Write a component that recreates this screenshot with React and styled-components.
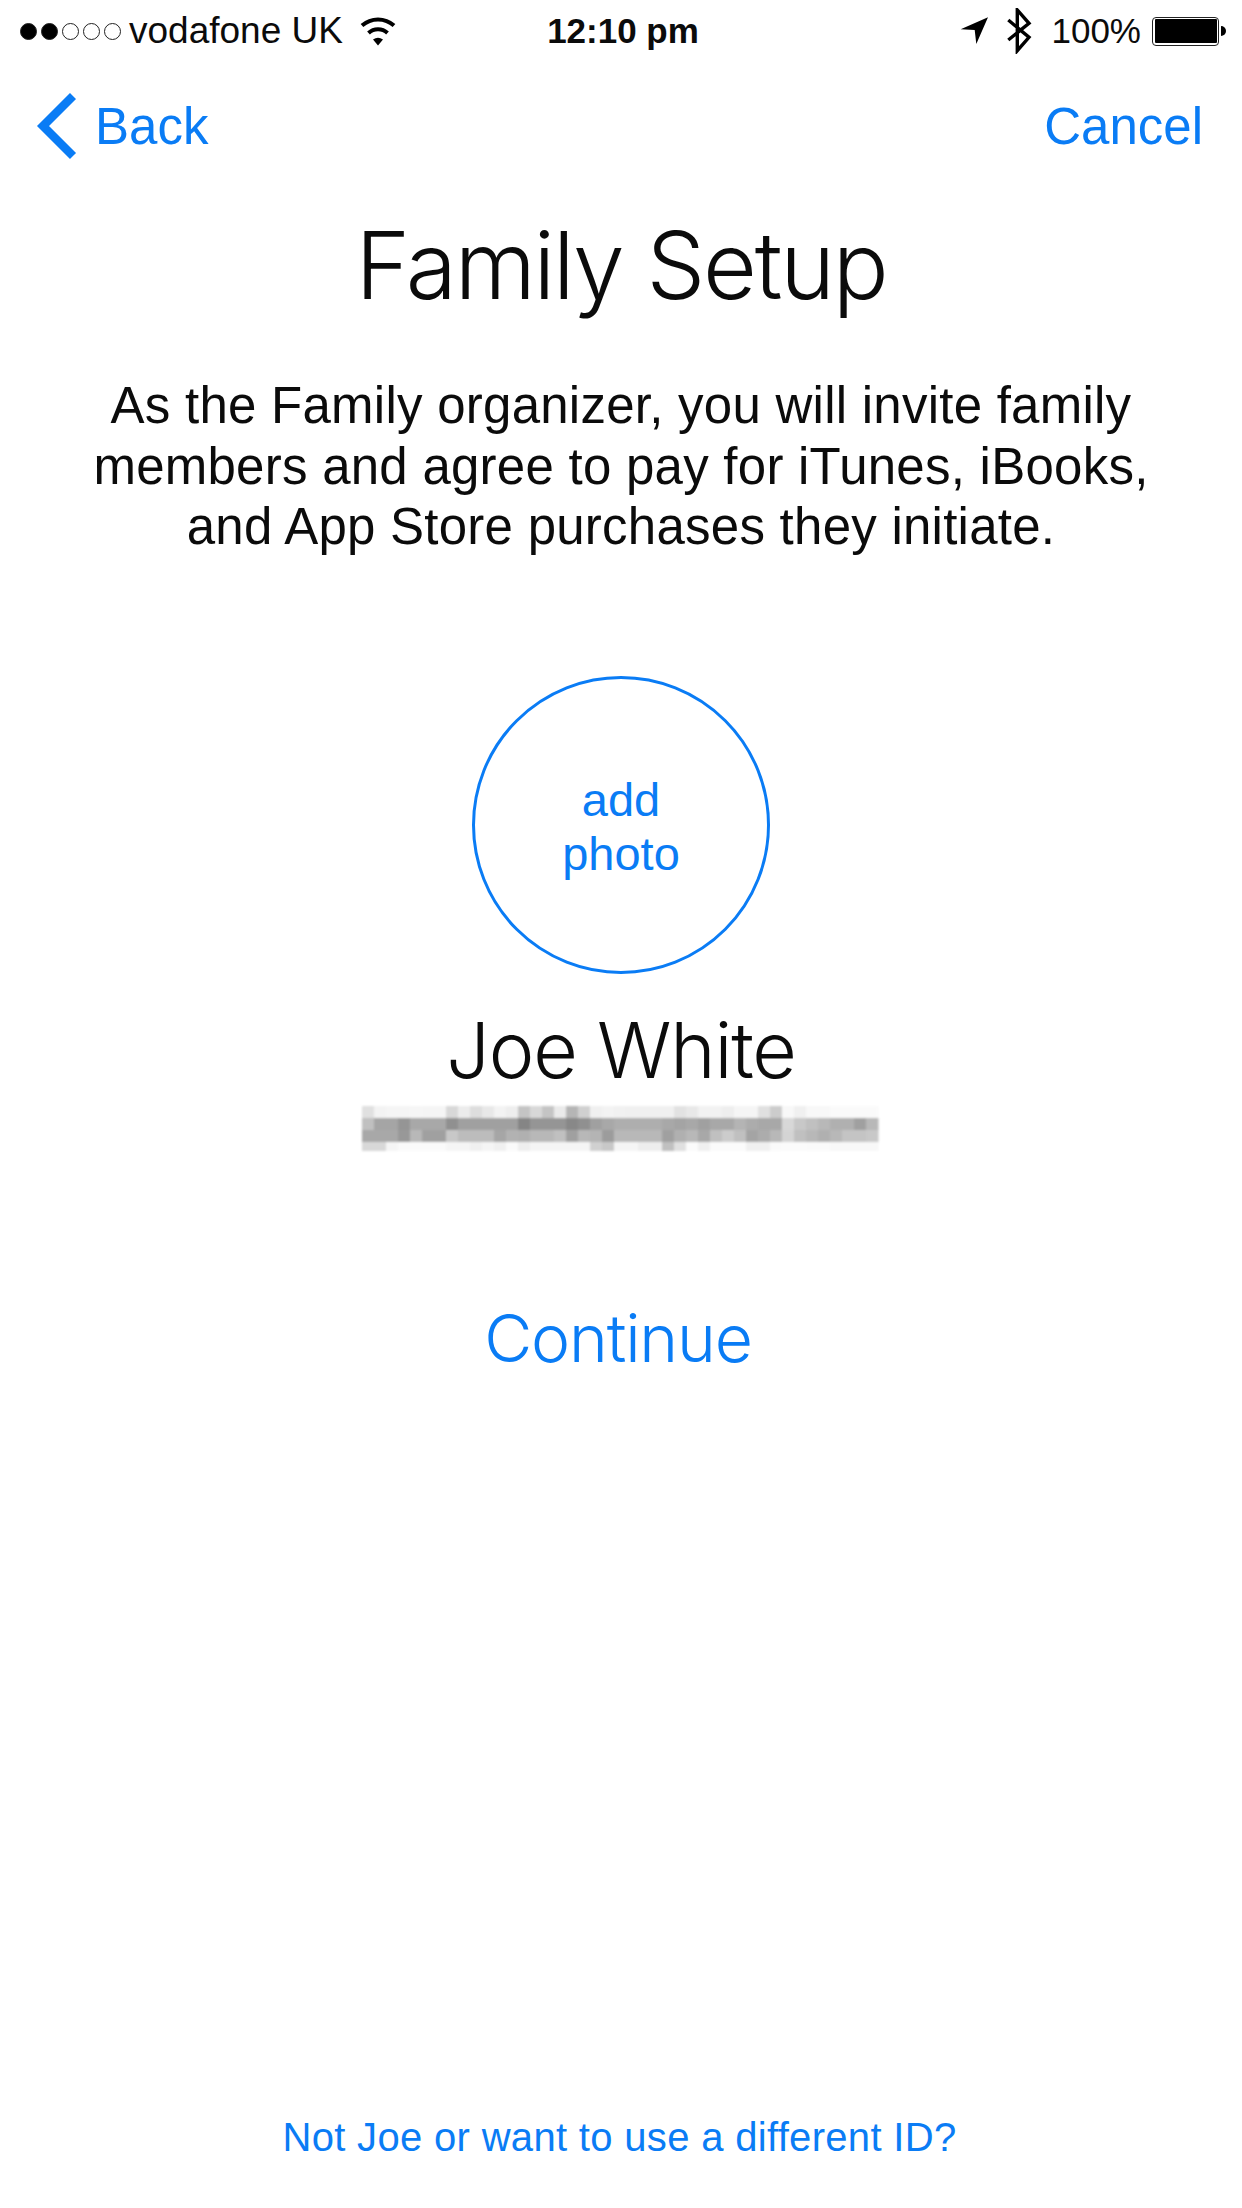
import React from 'react';
import styled, { createGlobalStyle } from 'styled-components';

const BLUE = '#0a7cf5';

const GlobalStyle = createGlobalStyle`
  html, body {
    margin: 0;
    padding: 0;
    background: #fff;
  }
`;

const Screen = styled.div`
  width: 1242px;
  height: 2208px;
  display: flex;
  flex-direction: column;
  align-items: center;
  overflow: hidden;
  background: #fff;
  color: #0b0b0b;
  font-family: "Liberation Sans", Arial, sans-serif;
`;

const StatusBar = styled.div`
  width: 100%;
  height: 62px;
  box-sizing: border-box;
  padding: 0 16px 0 20px;
  display: grid;
  grid-template-columns: 1fr auto 1fr;
  align-items: center;
  font-size: 37px;
`;

const StatusLeft = styled.div`
  display: flex;
  align-items: center;
`;

const StatusRight = styled.div`
  display: flex;
  align-items: center;
  justify-content: flex-end;
`;

const Signal = styled.div`
  display: flex;
  gap: 4px;
  margin-right: 8px;
`;

const Dot = styled.span`
  width: 17px;
  height: 17px;
  box-sizing: border-box;
  border-radius: 50%;
  border: 1.5px solid #222;
  background: ${({ $on }) => ($on ? '#000' : '#fff')};
`;

const Carrier = styled.span`
  margin-right: 16px;
`;

const Time = styled.span`
  font-weight: 700;
  font-size: 35px;
`;

const Percent = styled.span`
  margin: 0 11px 0 18px;
  font-size: 35px;
`;

const LocationSlot = styled.span`
  display: flex;
  margin: 0 15px 0 1px;
`;

const Battery = styled.div`
  width: 67px;
  height: 29px;
  box-sizing: border-box;
  border: 1.5px solid #222;
  border-radius: 4px;
  padding: 1.5px;
  background: #fff;
  display: flex;
`;

const BatteryFill = styled.div`
  flex: 1;
  background: #000;
  border-radius: 1px;
`;

const BatteryNub = styled.div`
  width: 5px;
  height: 10px;
  margin-left: 2px;
  background: #000;
  border-radius: 0 5px 5px 0;
`;

const NavBar = styled.nav`
  width: 100%;
  height: 78px;
  margin-top: 25px;
  box-sizing: border-box;
  padding: 0 39px 0 36px;
  display: flex;
  align-items: center;
  justify-content: space-between;
  font-size: 51px;
  color: ${BLUE};
`;

const BackLink = styled.div`
  display: flex;
  align-items: center;
  gap: 17px;
`;

const Title = styled.h1`
  margin: 45px 0 0;
  font-family: Inter, "Liberation Sans", sans-serif;
  font-weight: 300;
  font-size: 93px;
  line-height: 110px;
  letter-spacing: -2.2px;
`;

const Intro = styled.p`
  margin: 56px 0 0;
  font-size: 51px;
  line-height: 60.5px;
  text-align: center;
  letter-spacing: 0.25px;
  white-space: nowrap;
`;

const PhotoCircle = styled.div`
  width: 298px;
  height: 298px;
  margin-top: 118px;
  padding-top: 4px;
  box-sizing: border-box;
  border: 3px solid ${BLUE};
  border-radius: 50%;
  display: flex;
  align-items: center;
  justify-content: center;
  text-align: center;
  color: ${BLUE};
  font-size: 47px;
  line-height: 54px;
`;

const Name = styled.div`
  margin-top: 26px;
  font-family: Inter, "Liberation Sans", sans-serif;
  font-weight: 300;
  font-size: 77px;
  line-height: 100px;
  letter-spacing: -1.2px;
`;

const Redacted = styled.svg`
  display: block;
`;

const ContinueLink = styled.div`
  margin: 133px 6px 0 0;
  font-family: Inter, "Liberation Sans", sans-serif;
  font-weight: 300;
  font-size: 66px;
  line-height: 90px;
  color: ${BLUE};
  letter-spacing: -1.2px;
`;

const Spacer = styled.div`
  flex: 1;
`;

const FooterLink = styled.div`
  margin: 0 3px 48px 0;
  font-size: 40px;
  line-height: 46px;
  color: ${BLUE};
  letter-spacing: 0.32px;
`;

// pixelated e-mail, one row per mosaic line, 12px cells
const MOSAIC = [
  'e0 f3 f5 f5 f6 f5 f5 d8 ec dd e8 f3 ee c4 d8 c4 ea b5 d0 f0 f3 f1 f0 f0 f0 f0 e2 e8 f2 f2 ee f5 f5 e0 cc f8 f0 f8 f8 fa fa fa fa',
  'c0 a5 a5 95 a8 a8 a8 90 a0 a0 a0 a0 a0 85 95 95 95 88 90 a0 a8 ae ae ae ae a8 a4 a8 a0 a8 a8 b4 ac a8 a8 d8 c8 c0 b8 b0 b0 a0 b8',
  'a8 a8 a8 98 b8 a0 a0 c8 bc bc bc a6 b2 b0 b8 b8 c0 a0 b8 b4 9c b8 b8 b8 b8 a0 b0 b8 a8 c0 cc c0 a4 ac b8 d4 c0 b8 b0 b8 c4 c4 c8',
  'd8 d8 f5 fa fa fa fa f5 f5 f0 f5 f0 fa ee f5 f5 f5 f5 f5 d0 c8 f5 f5 ee ee c0 e0 fb f0 fb fb fb f0 f0 fa fb fb fa fa f8 f8 f8 f8',
].map((row) => row.split(' '));

const WifiIcon = () => (
  <svg width="38" height="30" viewBox="0 0 38 30" fill="none" stroke="#000">
    <path d="M3 9.5 A24 24 0 0 1 35 9.5" strokeWidth="4" />
    <path d="M9.5 17 A14 14 0 0 1 28.5 17" strokeWidth="4" />
    <path d="M14 23.5 Q19 20 24 23.5 L19 29.5 Z" fill="#000" stroke="none" />
  </svg>
);

const LocationIcon = () => (
  <svg width="32" height="32" viewBox="0 0 32 32">
    <path d="M2.7 14.3 L30 2.3 L18.3 29 L16.7 15 Z" fill="#000" />
  </svg>
);

const BluetoothIcon = () => (
  <svg width="28" height="46" viewBox="0 0 28 46" fill="none" stroke="#000" strokeWidth="3.4">
    <path d="M3.3 12 L24 29.3 L12.3 42.7 L12.3 2 L24 15.3 L3.3 32" />
  </svg>
);

const ChevronIcon = () => (
  <svg width="42" height="66" viewBox="0 0 42 66" fill="none" stroke={BLUE} strokeWidth="8.5">
    <path d="M37 3 L7 33 L37 63" />
  </svg>
);

export default function App() {
  return (
    <Screen>
      <GlobalStyle />
      <StatusBar>
        <StatusLeft>
          <Signal>
            {[true, true, false, false, false].map((on, i) => (
              <Dot key={i} $on={on} />
            ))}
          </Signal>
          <Carrier>vodafone UK</Carrier>
          <WifiIcon />
        </StatusLeft>
        <Time>12:10 pm</Time>
        <StatusRight>
          <LocationSlot>
            <LocationIcon />
          </LocationSlot>
          <BluetoothIcon />
          <Percent>100%</Percent>
          <Battery>
            <BatteryFill />
          </Battery>
          <BatteryNub />
        </StatusRight>
      </StatusBar>

      <NavBar>
        <BackLink>
          <ChevronIcon />
          Back
        </BackLink>
        <span>Cancel</span>
      </NavBar>

      <Title>Family Setup</Title>
      <Intro>
        As the Family organizer, you will invite family
        <br />
        members and agree to pay for iTunes, iBooks,
        <br />
        and App Store purchases they initiate.
      </Intro>

      <PhotoCircle>
        <div>
          add
          <br />
          photo
        </div>
      </PhotoCircle>
      <Name>Joe White</Name>
      <Redacted width="540" height="60" viewBox="0 0 540 60">
        <filter id="soft">
          <feGaussianBlur stdDeviation="1" />
        </filter>
        <g filter="url(#soft)">
          {MOSAIC.map((row, y) =>
            row.map((c, x) => (
              <rect
                key={`${x}-${y}`}
                x={11 + x * 12}
                y={6 + y * 12}
                width="12.5"
                height={y === 3 ? 9 : 12.5}
                fill={`#${c}${c}${c}`}
              />
            ))
          )}
        </g>
      </Redacted>

      <ContinueLink>Continue</ContinueLink>
      <Spacer />
      <FooterLink>Not Joe or want to use a different ID?</FooterLink>
    </Screen>
  );
}
